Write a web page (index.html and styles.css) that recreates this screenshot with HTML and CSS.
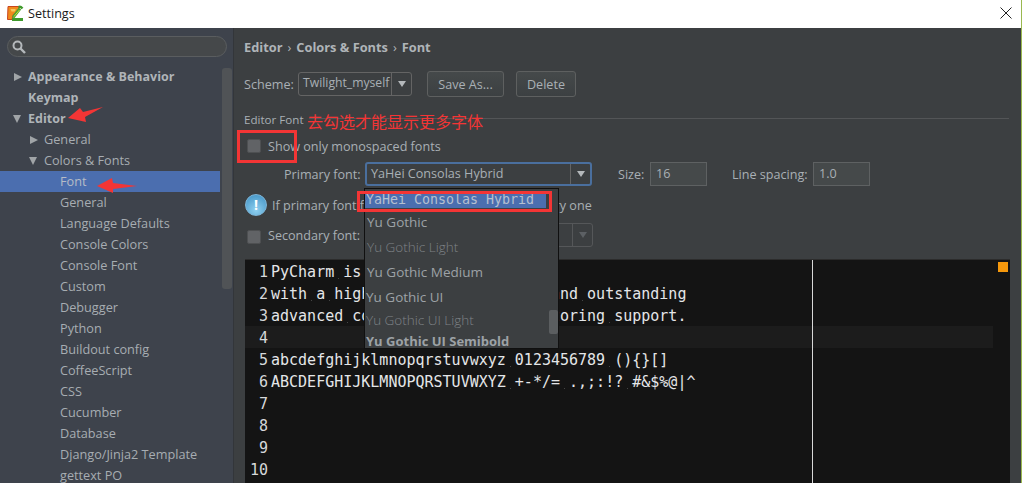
FILE: index.html
```html
<!DOCTYPE html>
<html lang="en">
<head>
<meta charset="utf-8">
<title>Settings</title>
<link rel="stylesheet" href="styles.css">
</head>
<body>
<div class="window">
  <header class="titlebar">
    <svg class="logo" width="17" height="17" viewBox="0 0 17 17">
      <path d="M1 1.500h10.500q1 3-1 5.500q-2 2-4 2l-1.500 5.500H.5z" fill="#ef8a1c" stroke="#c9441f" stroke-width="1"/>
      <path d="M3.500 4h5q.5 1.500-1 2.500H4.500z" fill="#f7c65a"/>
      <path d="M15.500 3.500q-2-2.500-4-1.500" stroke="#3f9a2c" stroke-width="2.400" fill="none"/>
      <path d="M13 3.500L6 12.500" stroke="#4fa52f" stroke-width="3" fill="none"/>
      <path d="M5 14.500h11" stroke="#3f9a2c" stroke-width="3" fill="none"/>
      <path d="M7 11.500L12.500 5" stroke="#c8dc3c" stroke-width="1" fill="none"/>
    </svg>
    <span class="title">Settings</span>
    <svg class="close" width="12" height="12" viewBox="0 0 12 12"><path d="M.5.5l11 11M11.500.5l-11 11" stroke="#222" fill="none"/></svg>
  </header>
  <div class="body">
    <aside class="sidebar">
      <div class="search">
        <svg width="14" height="14" viewBox="0 0 14 14"><circle cx="5.500" cy="5.500" r="4" stroke="#b4b8bb" stroke-width="2" fill="none"/><path d="M8.500 8.500l4.500 4.500" stroke="#b4b8bb" stroke-width="2.400"/></svg>
      </div>
      <ul class="tree">
        <li class="row l0 bold"><i class="tri right"></i>Appearance &amp; Behavior</li>
        <li class="row l0 bold">Keymap</li>
        <li class="row l0 bold"><i class="tri down"></i>Editor</li>
        <li class="row l1"><i class="tri right"></i>General</li>
        <li class="row l1"><i class="tri down"></i>Colors &amp; Fonts</li>
        <li class="row l2 selected">Font</li>
        <li class="row l2">General</li>
        <li class="row l2">Language Defaults</li>
        <li class="row l2">Console Colors</li>
        <li class="row l2">Console Font</li>
        <li class="row l2">Custom</li>
        <li class="row l2">Debugger</li>
        <li class="row l2">Python</li>
        <li class="row l2">Buildout config</li>
        <li class="row l2">CoffeeScript</li>
        <li class="row l2">CSS</li>
        <li class="row l2">Cucumber</li>
        <li class="row l2">Database</li>
        <li class="row l2">Django/Jinja2 Template</li>
        <li class="row l2">gettext PO</li>
      </ul>
      <div class="side-scroll"></div>
    </aside>
    <main class="content">
      <nav class="crumbs">Editor<span class="sep">›</span>Colors &amp; Fonts<span class="sep">›</span>Font</nav>
      <div class="scheme">
        <label class="scheme-label">Scheme:</label>
        <div class="combo scheme-combo"><span class="combo-text">Twilight_myself</span><span class="combo-btn"><i class="tri down small"></i></span></div>
        <button class="btn save">Save As...</button>
        <button class="btn del">Delete</button>
      </div>
      <div class="section"><span>Editor Font</span><hr></div>
      <div class="check-row"><span class="check"></span>Show only monospaced fonts</div>
      <div class="primary">
        <label class="field-label">Primary font:</label>
        <div class="combo primary-combo"><span class="combo-text">YaHei Consolas Hybrid</span><span class="combo-btn"><i class="tri down small"></i></span></div>
        <label class="size-label">Size:</label><div class="input size">16</div>
        <label class="spacing-label">Line spacing:</label><div class="input spacing">1.0</div>
      </div>
      <div class="info">
        <span class="info-icon">!</span>
        <span>If primary font fails to display a symbol, secondary one</span>
      </div>
      <div class="secondary">
        <span class="check"></span><label class="secondary-label">Secondary font:</label>
        <div class="combo secondary-combo"><span class="combo-text"></span><span class="combo-btn"><i class="tri down small dim"></i></span></div>
      </div>
      <div class="editor">
        <div class="code-row"><b>1</b><span>PyCharm<i class="ws"> </i>is<i class="ws"> </i>a<i class="ws"> </i>full-featured<i class="ws"> </i>IDE</span></div>
        <div class="code-row"><b>2</b><span>with<i class="ws"> </i>a<i class="ws"> </i>high<i class="ws"> </i>level<i class="ws"> </i>of<i class="ws"> </i>usability<i class="ws"> </i>and<i class="ws"> </i>outstanding</span></div>
        <div class="code-row"><b>3</b><span>advanced<i class="ws"> </i>code<i class="ws"> </i>editing<i class="ws"> </i>and<i class="ws"> </i>refactoring<i class="ws"> </i>support.</span></div>
        <div class="code-row current"><b>4</b><span></span></div>
        <div class="code-row"><b>5</b><span>abcdefghijklmnopqrstuvwxyz<i class="ws"> </i>0123456789<i class="ws"> </i>(){}[]</span></div>
        <div class="code-row"><b>6</b><span>ABCDEFGHIJKLMNOPQRSTUVWXYZ<i class="ws"> </i>+-*/=<i class="ws"> </i>.,;:!?<i class="ws"> </i>#&amp;$%@|^</span></div>
        <div class="code-row"><b>7</b><span></span></div>
        <div class="code-row"><b>8</b><span></span></div>
        <div class="code-row"><b>9</b><span></span></div>
        <div class="code-row"><b>10</b><span></span></div>
        <div class="margin-line"></div>
        <div class="marker"></div>
      </div>
      <div class="popup">
        <div class="opt hi">YaHei Consolas Hybrid</div>
        <div class="opt">Yu Gothic</div>
        <div class="opt light">Yu Gothic Light</div>
        <div class="opt med">Yu Gothic Medium</div>
        <div class="opt ui">Yu Gothic UI</div>
        <div class="opt ui-light">Yu Gothic UI Light</div>
        <div class="opt semi">Yu Gothic UI Semibold</div>
        <div class="popup-scroll"></div>
      </div>
    </main>
  </div>
  <div class="mark box-check"></div>
  <div class="mark box-item"></div>
  <div class="note">去勾选才能显示更多字体</div>
  <svg class="arrow arrow-editor" width="36" height="16" viewBox="0 0 36 16"><path d="M0 11L12 1l3 4L35 0 17 10l1 5z" fill="#f33535"/></svg>
  <svg class="arrow arrow-font" width="40" height="16" viewBox="0 0 40 16"><path d="M0 8L15 0l1 5 24 3-24 3v4z" fill="#f33535"/></svg>
</div>
</body>
</html>
```
FILE: styles.css
```css
* { box-sizing: border-box; }
html, body { margin: 0; height: 100%; overflow: hidden; background: #fff; }
body { font-family: "Open Sans", "Noto Sans", sans-serif; font-size: 12.6px; color: #a9b0b5; }
ul { list-style: none; margin: 0; padding: 0; }
label { white-space: nowrap; }

.window { position: relative; width: 1022px; height: 483px; display: flex; flex-direction: column; border-right: 1px solid #9ab84f; }
.titlebar { height: 28px; flex: none; background: #fff; display: flex; align-items: center; padding: 0 9px 2px 7px; color: #1a1a1a; }
.logo { flex: none; }
.title { margin-left: 4px; font-size: 12.6px; }
.close { margin-left: auto; }

.body { flex: 1; display: flex; min-height: 0; background: #3c3f41; }
.sidebar { position: relative; width: 234px; flex: none; background: #3e434c; border-right: 1px solid #33363a; padding-top: 8px; overflow: hidden; }
.search { height: 21px; margin: 0 6px 0 7px; border: 1px solid #5a5d5f; border-radius: 11px; background: #45484a; display: flex; align-items: center; padding-left: 4px; }
.tree { margin-top: 9px; font-size: 12.7px; }
.row { height: 21px; line-height: 21px; white-space: nowrap; display: flex; align-items: center; position: relative; color: #a7adb2; }
.l0 { padding-left: 28px; }
.l1 { padding-left: 44px; }
.l2 { padding-left: 60px; }
.bold { font-weight: 700; font-size: 12.5px; color: #afb4b8; }
.selected { background: #4b6eaf; width: 220px; color: #b6bcc6; }
.tri { display: block; width: 0; height: 0; }
.row .tri { position: absolute; }
.l0 .tri { left: 14px; }
.l1 .tri { left: 30px; }
.tri.right { border-left: 8px solid #a0a4a7; border-top: 4.5px solid transparent; border-bottom: 4.5px solid transparent; }
.tri.down { border-top: 8px solid #a0a4a7; border-left: 4.5px solid transparent; border-right: 4.5px solid transparent; }
.l0 .tri.down { left: 13px; }
.l1 .tri.down { left: 29px; }
.tri.small { border-top-width: 6px; border-left-width: 4.5px; border-right-width: 4.5px; border-top-color: #b4b8bb; }
.tri.dim { border-top-color: #5c6064; }
.side-scroll { position: absolute; left: 222px; top: 40px; width: 10px; height: 221px; background: #505356; border-radius: 3px; }

.content { position: relative; flex: 1; min-width: 0; padding: 0 11px 0 10px; }
.crumbs { height: 20px; margin-top: 9px; line-height: 20px; font-weight: 700; font-size: 12.8px; color: #afb4b8; }
.sep { font-weight: 400; margin: 0 5px; }
.scheme { display: flex; align-items: center; margin-top: 14px; height: 26px; }
.scheme-label { width: 54px; }
.combo { display: flex; height: 24px; border: 1px solid #646464; border-radius: 3px; background: #3c3f41; }
.combo-text { flex: 1; padding-left: 4px; line-height: 20px; white-space: nowrap; overflow: hidden; color: #a9b0b5; }
.combo-btn { width: 20px; flex: none; border-left: 1px solid #646464; display: flex; align-items: center; justify-content: center; }
.scheme-combo { width: 114px; font-size: 12.2px; }
.btn { font: inherit; color: #a9b0b5; height: 26px; border: 1px solid #5e6060; border-radius: 3px; background: linear-gradient(#45494a, #3c4042); padding: 0; margin: 0; }
.save { width: 77px; margin-left: 15px; }
.del { width: 60px; margin-left: 12px; }

.section { display: flex; align-items: center; margin-top: 11px; height: 20px; font-size: 11.6px; margin-right: 1px; }
.section span { padding-top: 2px; }
.section hr { flex: 1; margin: 0 0 0 5px; border: 0; border-top: 1px solid #535557; }
.check-row { display: flex; align-items: center; height: 20px; margin-top: 8px; padding-left: 3px; }
.check { width: 14px; height: 14px; flex: none; margin-right: 7px; border: 1px solid #4e5052; border-radius: 2px; background: #616366; }
.primary { display: flex; align-items: center; height: 24px; margin-top: 6px; padding-left: 40px; }
.field-label { width: 76px; text-align: right; }
.primary-combo { width: 227px; height: 24px; margin-left: 5px; border: 2px solid #4a6f9e; }
.size-label { margin-left: 26px; width: 26px; }
.input { height: 24px; width: 57px; border: 1px solid #5e6162; background: #45494a; padding-left: 5px; line-height: 22px; color: #a9b0b5; }
.size { margin-left: 6px; }
.spacing-label { margin-left: 25px; width: 75px; }
.spacing { margin-left: 6px; }
.info { display: flex; align-items: center; height: 24px; margin-top: 7px; padding-left: 1px; gap: 5px; white-space: nowrap; }
.info-icon { width: 22px; height: 22px; border-radius: 50%; background: radial-gradient(circle at 50% 75%, #8fd0f0, #3d8fc2); border: 1px solid #7fb6d8; color: #fff; text-align: center; font-weight: 700; line-height: 20px; font-size: 14px; }
.secondary { display: flex; align-items: flex-start; height: 24px; margin-top: 6px; padding-left: 3px; }
.secondary .check { margin-top: 7px; }
.secondary-label { width: 91px; line-height: 26px; }
.secondary-combo { width: 228px; margin-left: 6px; border-color: #555759; }
.secondary-combo .combo-btn { border-left-color: #555759; }

.editor { position: relative; margin: 13px 0 0 1px; height: 223px; background: #141414; box-shadow: 0 -1px 0 #2c2c2c; font-family: "DejaVu Sans Mono", monospace; font-size: 15px; color: #e4e6e8; }
.code-row { height: 22px; line-height: 22px; padding-top: 1px; display: flex; white-space: pre; }
.code-row b { width: 23px; flex: none; text-align: right; font-weight: 400; color: #d6d8da; }
.code-row span { margin-left: 3px; }
.ws { font-style: normal; background: linear-gradient(#454545, #454545) no-repeat 50% 15px / 1px 1px; }
.current { background: #1c1c1c; width: 748px; }
.margin-line { position: absolute; left: 567px; top: 0; bottom: 0; width: 1px; background: #d8d8d8; }
.marker { position: absolute; right: 2px; top: 2px; width: 10px; height: 10px; background: #f5980c; }

.popup { position: absolute; left: 130px; top: 160px; width: 195px; height: 161px; background: #3c3f41; border: 1px solid #101010; padding-top: 3px; color: #9da2a6; font-size: 13.5px; overflow: hidden; }
.opt { height: 25px; line-height: 25px; padding-left: 2px; white-space: nowrap; }
.opt.hi { height: 16px; line-height: 16px; width: 181px; padding-left: 1px; background: #4b6eaf; font-family: "DejaVu Sans Mono", monospace; font-size: 13.3px; color: #b7c0d0; margin-bottom: 2px; }
.opt.light { color: #7e8286; font-weight: 300; }
.opt.med { font-weight: 500; }
.opt.ui { height: 24px; padding-left: 1px; }
.opt.ui-light { height: 22px; line-height: 22px; padding-left: 1px; color: #7e8286; font-weight: 300; }
.opt.semi { font-weight: 700; font-size: 13px; height: 20px; line-height: 20px; padding-left: 1px; }
.popup-scroll { position: absolute; right: 0; top: 121px; width: 9px; height: 24px; background: #5b5e60; border-radius: 2px; }

.mark { position: absolute; border: 3px solid #f33535; }
.box-check { left: 237px; top: 130px; width: 60px; height: 33px; }
.box-item { left: 357px; top: 191px; width: 195px; height: 21px; }
.note { position: absolute; left: 307px; top: 110px; font-family: "Noto Sans CJK SC", sans-serif; font-size: 16px; line-height: 22px; color: #f33535; }
.arrow { position: absolute; }
.arrow-editor { left: 68px; top: 107px; }
.arrow-font { left: 97px; top: 178px; }
```
